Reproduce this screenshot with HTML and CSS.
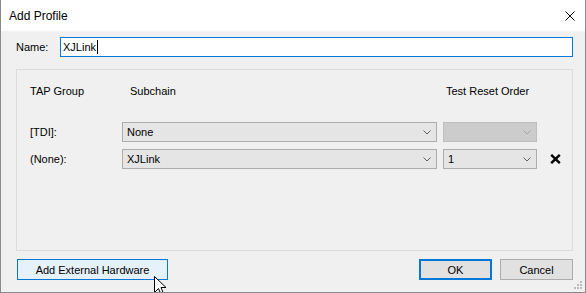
FILE: index.html
```html
<!DOCTYPE html>
<html>
<head>
<meta charset="utf-8">
<link rel="stylesheet" href="styles.css">
</head>
<body>
<div class="window">
  <div class="titlebar">
    <span class="title">Add Profile</span>
    <svg class="close" width="10" height="10" viewBox="0 0 10 10"><path d="M0.5 0.5 L9.5 9.5 M9.5 0.5 L0.5 9.5" stroke="#000" stroke-width="1" fill="none"/></svg>
  </div>
  <div class="content">
    <div class="name-row">
      <span class="name-label">Name:</span>
      <div class="textbox">XJLink<span class="caret"></span></div>
    </div>
    <div class="group">
      <div class="grid">
        <div class="hdr">TAP Group</div>
        <div class="hdr sub">Subchain</div>
        <div class="hdr order">Test Reset Order</div>
        <div></div>

        <div class="lbl">[TDI]:</div>
        <div class="combo"><span class="val">None</span><svg class="chev" width="8" height="5" viewBox="0 0 8 5"><path d="M0.5 0.5 L4 4 L7.5 0.5" stroke="#606060" fill="none"/></svg></div>
        <div class="combo disabled"><span class="val"></span><svg class="chev" width="8" height="5" viewBox="0 0 8 5"><path d="M0.5 0.5 L4 4 L7.5 0.5" stroke="#a6a6a6" fill="none"/></svg></div>
        <div></div>

        <div class="lbl">(None):</div>
        <div class="combo"><span class="val">XJLink</span><svg class="chev" width="8" height="5" viewBox="0 0 8 5"><path d="M0.5 0.5 L4 4 L7.5 0.5" stroke="#606060" fill="none"/></svg></div>
        <div class="combo"><span class="val">1</span><svg class="chev" width="8" height="5" viewBox="0 0 8 5"><path d="M0.5 0.5 L4 4 L7.5 0.5" stroke="#606060" fill="none"/></svg></div>
        <div class="del"><svg width="11" height="10" viewBox="0 0 11 10"><path d="M1.2 0.8 L9.8 9.2 M9.8 0.8 L1.2 9.2" stroke="#000" stroke-width="2.4" fill="none"/></svg></div>
      </div>
    </div>
    <div class="buttons">
      <div class="btn ext">Add External Hardware</div>
      <div class="spacer"></div>
      <div class="btn ok">OK</div>
      <div class="btn cancel">Cancel</div>
    </div>
  </div>
  <svg class="grip" width="9" height="9" viewBox="0 0 9 9">
    <rect x="6" y="0" width="2" height="2" fill="#bdbdbd"/>
    <rect x="3" y="3" width="2" height="2" fill="#bdbdbd"/>
    <rect x="6" y="3" width="2" height="2" fill="#bdbdbd"/>
    <rect x="0" y="6" width="2" height="2" fill="#bdbdbd"/>
    <rect x="3" y="6" width="2" height="2" fill="#bdbdbd"/>
    <rect x="6" y="6" width="2" height="2" fill="#bdbdbd"/>
  </svg>
  <svg class="cursor" width="13" height="21" viewBox="0 0 13 21"><path d="M0.5 0.5 L0.5 16.5 L4.5 12.5 L7 18.5 L9.5 17.5 L7 11.5 L12 11.5 Z" fill="#fff" stroke="#000" stroke-width="1"/></svg>
</div>
</body>
</html>
```

FILE: styles.css
```css
* { box-sizing: border-box; }
html, body { margin: 0; padding: 0; }
body {
  font-family: "Liberation Sans", Arial, sans-serif;
  font-size: 11px;
  color: #000;
  background: #f0f0f0;
}
.window {
  position: relative;
  width: 586px;
  height: 293px;
  border: 1px solid #8a8a8a;
  border-top: none;
  background: #f0f0f0;
  display: flex;
  flex-direction: column;
  overflow: hidden;
}
.titlebar {
  height: 31px;
  background: #fff;
  display: flex;
  align-items: center;
  padding-left: 8px;
  padding-right: 10px;
  flex: none;
}
.title {
  font-size: 12px;
  flex: 1;
  line-height: 14px;
}
.close { display: block; }
.content {
  padding: 6px 12px 0 15px;
  display: flex;
  flex-direction: column;
}
.name-row {
  display: flex;
  align-items: center;
  height: 20px;
}
.name-label {
  width: 44px;
  flex: none;
}
.textbox {
  flex: 1;
  height: 20px;
  border: 1px solid #0078d7;
  background: #fff;
  padding-left: 2px;
  display: flex;
  align-items: center;
  line-height: 13px;
}
.caret {
  display: inline-block;
  width: 1px;
  height: 14px;
  background: #000;
  margin-left: 1px;
}
.group {
  margin-top: 12px;
  height: 182px;
  border: 1px solid #dcdcdc;
  padding: 14px 0 0 13px;
}
.grid {
  display: grid;
  grid-template-columns: 86px 315px 94px 18px;
  grid-template-rows: 31px 20px 20px;
  column-gap: 6px;
  row-gap: 7px;
}
.hdr {
  line-height: 14px;
  align-self: start;
  white-space: nowrap;
}
.hdr.sub { padding-left: 8px; }
.hdr.order { padding-left: 3px; }
.lbl {
  display: flex;
  align-items: center;
}
.combo {
  display: flex;
  align-items: center;
  border: 1px solid #adadad;
  background: #e5e5e5;
  padding-left: 4px;
  padding-right: 5px;
}
.combo.disabled {
  background: #cccccc;
  border-color: #bfbfbf;
}
.val { flex: 1; }
.chev { display: block; }
.del {
  display: flex;
  align-items: center;
  justify-content: flex-end;
}
.del svg { display: block; }
.buttons {
  margin-top: 8px;
  display: flex;
  height: 21px;
}
.btn {
  height: 21px;
  display: flex;
  align-items: center;
  justify-content: center;
  background: #e1e1e1;
  border: 1px solid #adadad;
}
.btn.ext {
  width: 151px;
  margin-left: 1px;
  background: #e5f1fb;
  border-color: #0078d7;
}
.spacer { flex: 1; }
.btn.ok {
  width: 73px;
  border: 2px solid #0078d7;
  margin-right: 8px;
}
.btn.cancel { width: 73px; }
.grip {
  position: absolute;
  right: 2px;
  bottom: 2px;
}
.cursor {
  position: absolute;
  left: 153px;
  top: 276px;
}
```
